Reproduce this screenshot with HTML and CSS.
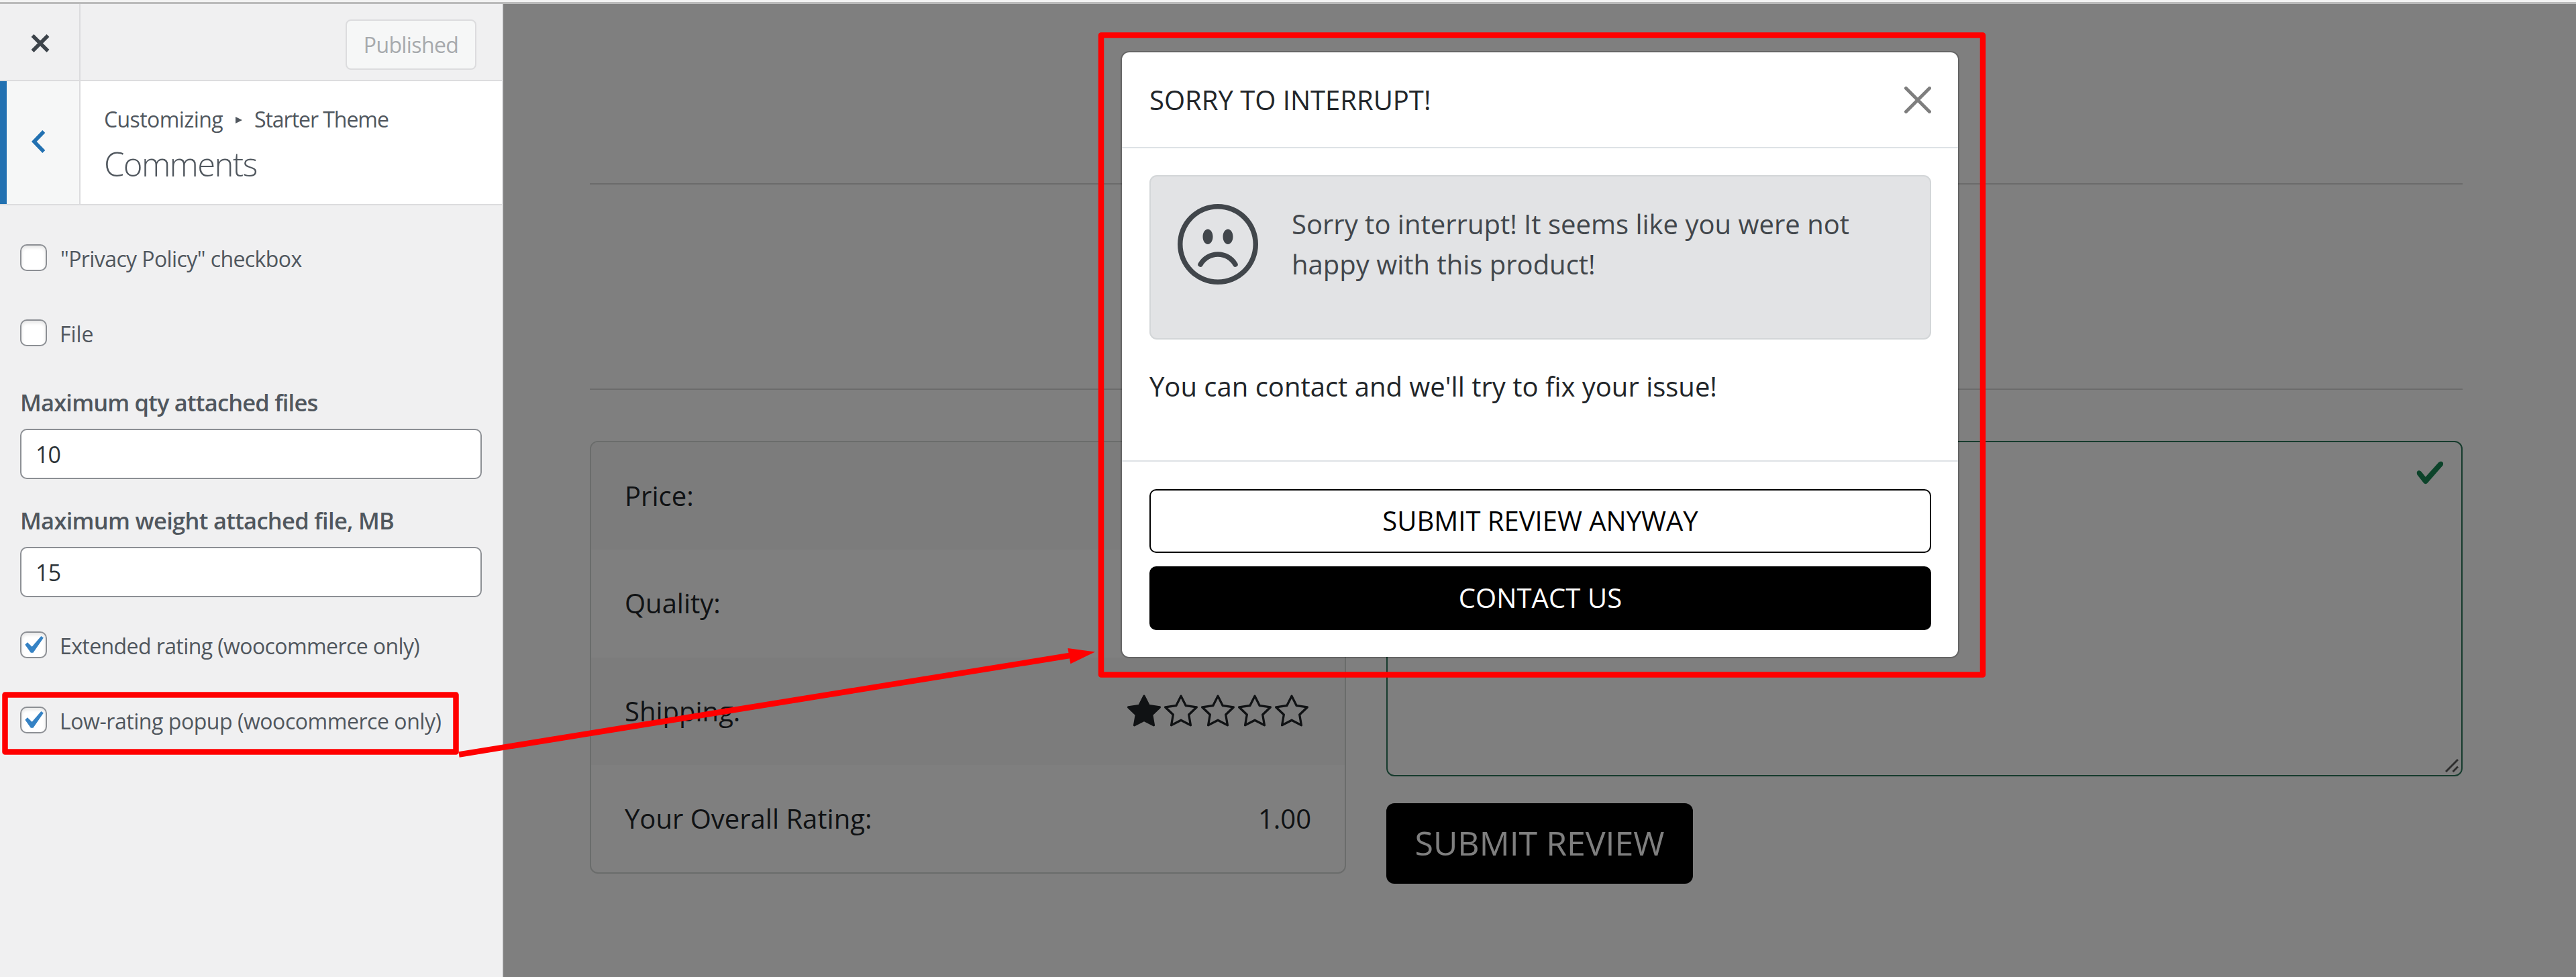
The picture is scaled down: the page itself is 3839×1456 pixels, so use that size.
FILE: index.html
```html
<!DOCTYPE html>
<html lang="en">
<head>
<meta charset="utf-8">
<title>Customize: Comments</title>
<link rel="stylesheet" href="styles.css">
</head>
<body>
<svg class="sprite" aria-hidden="true">
  <symbol id="wp-check" viewBox="0 0 20 20"><path d="M14.83 4.89l1.34.94-5.81 8.38H9.02L5.78 9.67l1.34-1.25 2.57 2.4z"/></symbol>
  <symbol id="star-fill" viewBox="0 0 16 16"><path d="M3.612 15.443c-.386.198-.824-.149-.746-.592l.83-4.73L.173 6.765c-.329-.314-.158-.888.283-.95l4.898-.696L7.538.792c.197-.39.73-.39.927 0l2.184 4.327 4.898.696c.441.062.612.636.282.95l-3.522 3.356.83 4.73c.078.443-.36.79-.746.592L8 13.187l-4.389 2.256z"/></symbol>
  <symbol id="star" viewBox="0 0 16 16"><path d="M2.866 14.85c-.078.444.36.791.746.593l4.39-2.256 4.389 2.256c.386.198.824-.149.746-.592l-.83-4.73 3.522-3.356c.33-.314.16-.888-.282-.95l-4.898-.696L8.465.792a.513.513 0 0 0-.927 0L5.354 5.12l-4.898.696c-.441.062-.612.636-.283.95l3.523 3.356-.83 4.73zm4.905-2.767-3.686 1.894.694-3.957a.565.565 0 0 0-.163-.505L1.71 6.745l4.052-.576a.525.525 0 0 0 .393-.288L8 2.223l1.847 3.658a.525.525 0 0 0 .393.288l4.052.575-2.906 2.77a.565.565 0 0 0-.163.506l.694 3.957-3.686-1.894a.503.503 0 0 0-.461 0z"/></symbol>
</svg>

<div class="browser-edge"></div>
<div class="app">
  <aside class="sidebar">
    <header class="topbar">
      <button class="close" aria-label="Close"><svg width="28" height="27" viewBox="0 0 28 27"><path d="M2.5 2l23 23M25.5 2l-23 23"/></svg></button>
      <button class="publish">Published</button>
    </header>
    <div class="section-title">
      <button class="back" aria-label="Back"><svg width="21" height="34" viewBox="0 0 21 34"><path d="M18.3 2L3.8 17l14.5 15"/></svg></button>
      <div class="titles">
        <div class="crumbs"><span class="crumb-root">Customizing</span><svg width="10" height="10" viewBox="0 0 10 10"><path d="M0 0l10 5-10 5z"/></svg><span class="crumb-theme">Starter Theme</span></div>
        <h1>Comments</h1>
      </div>
    </div>
    <div class="controls">
      <label class="check quoted"><span class="box"></span><span>"Privacy Policy" checkbox</span></label>
      <label class="check file"><span class="box"></span><span>File</span></label>
      <div class="field qty">
        <div class="field-label">Maximum qty attached files</div>
        <div class="input">10</div>
      </div>
      <div class="field weight">
        <div class="field-label">Maximum weight attached file, MB</div>
        <div class="input">15</div>
      </div>
      <label class="check extended"><span class="box"><svg><use href="#wp-check"/></svg></span><span>Extended rating (woocommerce only)</span></label>
      <label class="check low"><span class="box"><svg><use href="#wp-check"/></svg></span><span>Low-rating popup (woocommerce only)</span></label>
    </div>
  </aside>

  <main class="preview">
    <div class="content">
      <hr><hr>
      <div class="review">
        <div class="ratings">
          <div class="row"><span>Price:</span></div>
          <div class="row"><span>Quality:</span></div>
          <div class="row"><span>Shipping:</span>
            <span class="stars"><svg><use href="#star-fill"/></svg><svg><use href="#star"/></svg><svg><use href="#star"/></svg><svg><use href="#star"/></svg><svg><use href="#star"/></svg></span>
          </div>
          <div class="row"><span>Your Overall Rating:</span><span>1.00</span></div>
        </div>
        <div class="form">
          <div class="textarea">
            <svg class="valid" viewBox="0 0 8 8"><path d="M2.3 6.73L.6 4.53c-.4-1.04.46-1.4 1.1-.8l1.1 1.4 3.4-3.8c.6-.63 1.6-.27 1.2.7l-4 4.6c-.43.5-.8.4-1.1.1z"/></svg>
            <svg class="grip" viewBox="0 0 20 20"><path d="M1 19L19 1M11.5 19l7.5-7.5"/></svg>
          </div>
          <button class="submit">SUBMIT REVIEW</button>
        </div>
      </div>
    </div>
    <div class="backdrop"></div>
    <section class="modal">
      <header class="modal-head">
        <h2>SORRY TO INTERRUPT!</h2>
        <svg class="dismiss" viewBox="0 0 16 16"><path d="M.293.293a1 1 0 011.414 0L8 6.586 14.293.293a1 1 0 111.414 1.414L9.414 8l6.293 6.293a1 1 0 01-1.414 1.414L8 9.414l-6.293 6.293a1 1 0 01-1.414-1.414L6.586 8 .293 1.707a1 1 0 010-1.414z"/></svg>
      </header>
      <div class="modal-body">
        <div class="alert">
          <svg class="frown" viewBox="0 0 16 16"><path d="M8 15A7 7 0 1 1 8 1a7 7 0 0 1 0 14zm0 1A8 8 0 1 0 8 0a8 8 0 0 0 0 16z"/><path d="M4.285 12.433a.5.5 0 0 0 .683-.183A3.498 3.498 0 0 1 8 10.5c1.295 0 2.426.703 3.032 1.75a.5.5 0 0 0 .866-.5A4.498 4.498 0 0 0 8 9.5a4.5 4.5 0 0 0-3.898 2.25.5.5 0 0 0 .183.683zM7 6.5C7 7.328 6.552 8 6 8s-1-.672-1-1.5S5.448 5 6 5s1 .672 1 1.5zm4 0c0 .828-.448 1.5-1 1.5s-1-.672-1-1.5S9.448 5 10 5s1 .672 1 1.5z"/></svg>
          <p>Sorry to interrupt! It seems like you were not happy with this product!</p>
        </div>
        <p>You can contact and we'll try to fix your issue!</p>
      </div>
      <footer class="modal-foot">
        <button class="btn outline">SUBMIT REVIEW ANYWAY</button>
        <button class="btn solid">CONTACT US</button>
      </footer>
    </section>
  </main>
</div>

<svg class="annotations" viewBox="0 0 3839 1456">
  <rect x="7.5" y="1035.5" width="672" height="85"/>
  <rect x="1641" y="52.5" width="1314" height="953"/>
  <path d="M684 1124.5L1600 976"/>
  <path class="head" d="M1632 971.4L1591.3 966l4.1 23.3z"/>
</svg>
</body>
</html>
```
FILE: styles.css
```css
* { box-sizing: border-box; }
body {
  margin: 0;
  width: 3839px;
  height: 1456px;
  overflow: hidden;
  position: relative;
  display: flex;
  flex-direction: column;
  font-family: "Open Sans", "Noto Sans", sans-serif;
}
h1, h2, p { margin: 0; font-weight: 400; }
button { font: inherit; margin: 0; padding: 0; border: 0; }
.sprite { position: absolute; width: 0; height: 0; }

.browser-edge { height: 6px; background: #f3f3f3; border-bottom: 3px solid #bbb; flex: none; }
.app { flex: 1; display: flex; min-height: 0; }

/* customizer sidebar */
.sidebar {
  width: 750px;
  flex: none;
  background: #f0f0f1;
  border-right: 2px solid #dcdcde;
  color: #50575e;
  font-size: 32px;
  letter-spacing: -.59px;
}
.topbar {
  height: 115px;
  border-bottom: 2px solid #dcdcde;
  display: flex;
  justify-content: space-between;
  align-items: flex-start;
}
.close {
  width: 120px;
  height: 113px;
  border-right: 2px solid #dcdcde;
  background: none;
  display: flex;
  align-items: center;
  justify-content: center;
  padding: 4px 0 0 2px;
}
.close path { fill: none; stroke: #3c434a; stroke-width: 5.5; }
.publish {
  width: 195px;
  height: 75px;
  margin: 23px 38px 0 0;
  border: 2px solid #dcdcde;
  border-radius: 8px;
  background: #f6f7f7;
  color: #a7aaad;
  letter-spacing: -.62px;
}
.section-title {
  height: 185px;
  border-bottom: 2px solid #dcdcde;
  background: #fff;
  display: flex;
}
.back {
  width: 120px;
  border-left: 10px solid #2271b1;
  border-right: 2px solid #dcdcde;
  background: #f6f7f7;
  display: flex;
  align-items: center;
  padding-left: 37px;
}
.back svg { margin-top: -3px; }
.back path { fill: none; stroke: #2271b1; stroke-width: 5.5; }
.titles { padding: 34px 0 0 35px; }
.crumbs { display: flex; align-items: center; line-height: 46px; }
.crumbs svg { fill: #50575e; margin: 2px 18px 0 19px; }
.crumb-theme { letter-spacing: -1.04px; }
.titles h1 {
  margin-top: 9px;
  font-size: 49px;
  line-height: 68px;
  font-weight: 300;
  letter-spacing: -1.63px;
}
.controls { padding: 58px 0 0 30px; display: flex; flex-direction: column; }
.check { height: 40px; display: flex; align-items: center; gap: 19px; line-height: 40px; }
.check > span:last-child { padding-top: 3px; }
.quoted { gap: 20px; }
.box {
  width: 40px;
  height: 40px;
  border: 2px solid #8c8f94;
  border-radius: 10px;
  background: #fff;
  box-shadow: inset 0 3px 5px rgba(0, 0, 0, .1);
}
.box svg { display: block; width: 53px; height: 53px; margin: -8px 0 0 -10px; fill: #3582c4; }
.file, .low { margin-top: 72px; }
.file { letter-spacing: -.06px; }
.low { letter-spacing: -.45px; }
.qty { margin-top: 61px; letter-spacing: -.82px; }
.weight { margin-top: 39px; letter-spacing: -.7px; }
.extended { margin-top: 51px; }
.field-label { font-size: 34.5px; font-weight: 600; line-height: 46px; }
.input {
  width: 688px;
  height: 75px;
  margin-top: 16px;
  padding-left: 21px;
  border: 2px solid #8c8f94;
  border-radius: 10px;
  background: #fff;
  color: #2c3338;
  font-size: 34px;
  line-height: 73px;
}

/* previewed shop page */
.preview { flex: 1; position: relative; background: #fff; color: #212529; font-size: 40px; }
.content { padding: 267px 169px 0 129px; }
.content hr { height: 2px; border: 0; margin: 0; background: #d6d6d6; }
.content hr + hr { margin-top: 304px; }
.review { margin-top: 76px; display: flex; gap: 60px; }
.ratings {
  width: 1127px;
  height: 645px;
  flex: none;
  border: 2px solid #d4d8d6;
  border-radius: 12px;
  overflow: hidden;
  display: flex;
  flex-direction: column;
}
.row {
  flex: 1;
  display: flex;
  align-items: center;
  justify-content: space-between;
  padding: 0 50px 1px;
}
.row:nth-child(odd) { background: #f9f9f9; }
.stars { display: flex; gap: 5px; margin-right: 4px; }
.stars svg { width: 50px; height: 50px; fill: #212529; }
.form { flex: 1; }
.textarea { height: 500px; border: 2px solid #2d775a; border-radius: 12px; position: relative; }
.valid { position: absolute; right: 24px; top: 23px; width: 45px; height: 45px; fill: #198754; }
.grip { position: absolute; right: 4px; bottom: 4px; width: 20px; height: 20px; fill: none; stroke: #5c5c5c; stroke-width: 3; }
.submit {
  display: block;
  width: 457px;
  height: 120px;
  margin-top: 40px;
  padding-bottom: 2px;
  border-radius: 12px;
  background: #000;
  color: #fff;
  font-size: 50px;
}
.backdrop { position: absolute; inset: 0; background: rgba(0, 0, 0, .5); }

/* low-rating popup */
.modal {
  position: absolute;
  left: 920px;
  top: 70px;
  width: 1250px;
  height: 905px;
  border: 2px solid rgba(0, 0, 0, .2);
  border-radius: 13px;
  background: #fff;
  background-clip: padding-box;
  line-height: 60px;
}
.modal-head {
  height: 143px;
  border-bottom: 2px solid #dee2e6;
  padding: 0 40px 0 41px;
  display: flex;
  align-items: center;
  justify-content: space-between;
}
.modal-head h2 { font-size: 40px; }
.dismiss { width: 40px; height: 40px; opacity: .5; }
.modal-body { height: 465px; padding: 40px 40px 0 41px; }
.alert {
  height: 245px;
  margin-bottom: 40px;
  padding: 41px 80px 0 40px;
  border: 2px solid #d3d6d8;
  border-radius: 11px;
  background: #e2e3e5;
  color: #41464b;
  display: flex;
  align-items: flex-start;
  gap: 50px;
}
.frown { width: 120px; height: 120px; flex: none; fill: #41464b; }
.modal-foot {
  border-top: 2px solid #dee2e6;
  padding: 41px 40px 0 41px;
  display: flex;
  flex-direction: column;
  gap: 20px;
}
.btn { height: 95px; border: 2px solid #000; border-radius: 10px; padding-bottom: 2px; }
.outline { background: #fff; color: #000; }
.solid { background: #000; color: #fff; letter-spacing: .1px; }

.annotations { position: absolute; left: 0; top: 0; width: 3839px; height: 1456px; fill: none; stroke: #f00; stroke-width: 8.5; stroke-linejoin: round; }
.annotations .head { fill: #f00; stroke: none; }
```
